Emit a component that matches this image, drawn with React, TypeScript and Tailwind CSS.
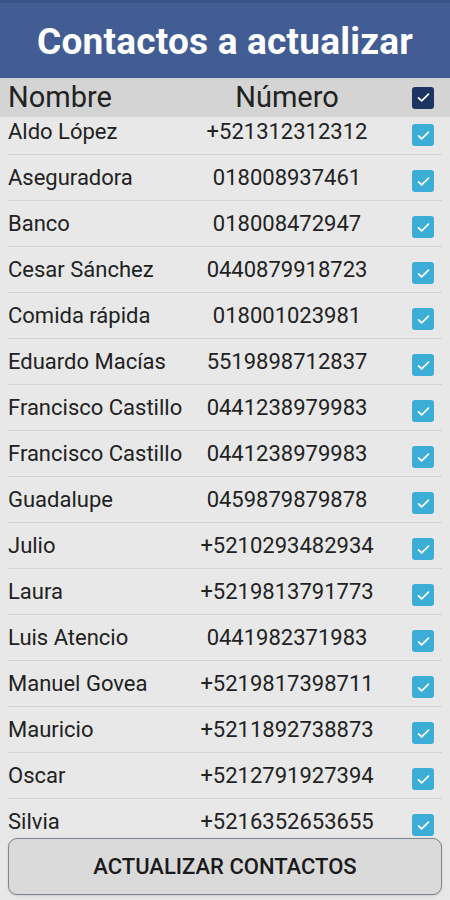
import React from "react";

const contacts: [string, string][] = [
  ["Aldo López", "+521312312312"],
  ["Aseguradora", "018008937461"],
  ["Banco", "018008472947"],
  ["Cesar Sánchez", "0440879918723"],
  ["Comida rápida", "018001023981"],
  ["Eduardo Macías", "5519898712837"],
  ["Francisco Castillo", "0441238979983"],
  ["Francisco Castillo", "0441238979983"],
  ["Guadalupe", "0459879879878"],
  ["Julio", "+5210293482934"],
  ["Laura", "+5219813791773"],
  ["Luis Atencio", "0441982371983"],
  ["Manuel Govea", "+5219817398711"],
  ["Mauricio", "+5211892738873"],
  ["Oscar", "+5212791927394"],
  ["Silvia", "+5216352653655"],
];

function Check({ dark }: { dark?: boolean }) {
  return (
    <div
      className={`flex h-[22px] w-[22px] items-center justify-center rounded-[3px] ${
        dark ? "bg-[#1d3463]" : "bg-[#3badd6]"
      }`}
    >
      <svg width="15" height="15" viewBox="0 0 24 24" fill="none">
        <path d="M4 12.5l5 5L20 6.5" stroke="white" strokeWidth="2.6" strokeLinecap="round" strokeLinejoin="round" />
      </svg>
    </div>
  );
}

export default function App() {
  return (
    <div className="flex h-[900px] w-[450px] flex-col overflow-hidden bg-[#e8e8e8] font-['Roboto',sans-serif] text-[#222]">
      <div className="h-[3px] bg-[#3a5386]" />
      <header className="flex h-[75px] items-center justify-center bg-[#425d94] pt-[2px]">
        <h1 className="text-[37px] font-bold leading-none tracking-[0.2px] text-white">Contactos a actualizar</h1>
      </header>

      <div className="flex h-[39px] items-center bg-[#d4d4d4] px-2">
        <div className="w-[180px] text-[29px] leading-none">Nombre</div>
        <div className="w-[198px] text-center text-[29px] leading-none">Número</div>
        <div className="ml-[26px]">
          <Check dark />
        </div>
      </div>

      <div className="flex-1 overflow-hidden">
        <div className="-mt-[8px]">
          {contacts.map(([name, phone], i) => (
            <div key={i} className="mx-2 flex h-[46px] items-center border-b border-[#d3d3d3] text-[22px]">
              <div className="w-[180px] whitespace-nowrap">{name}</div>
              <div className="w-[198px] whitespace-nowrap text-center">{phone}</div>
              <div className="ml-[26px] mt-[7px]">
                <Check />
              </div>
            </div>
          ))}
        </div>
      </div>

      <div className="px-2 pb-[5px]">
        <button className="flex h-[57px] w-full items-center justify-center rounded-[9px] border-[1.5px] border-[#7c8593] bg-[#dadada] text-[22px] font-medium text-[#1a1a1a] shadow-sm">
          ACTUALIZAR CONTACTOS
        </button>
      </div>
    </div>
  );
}
